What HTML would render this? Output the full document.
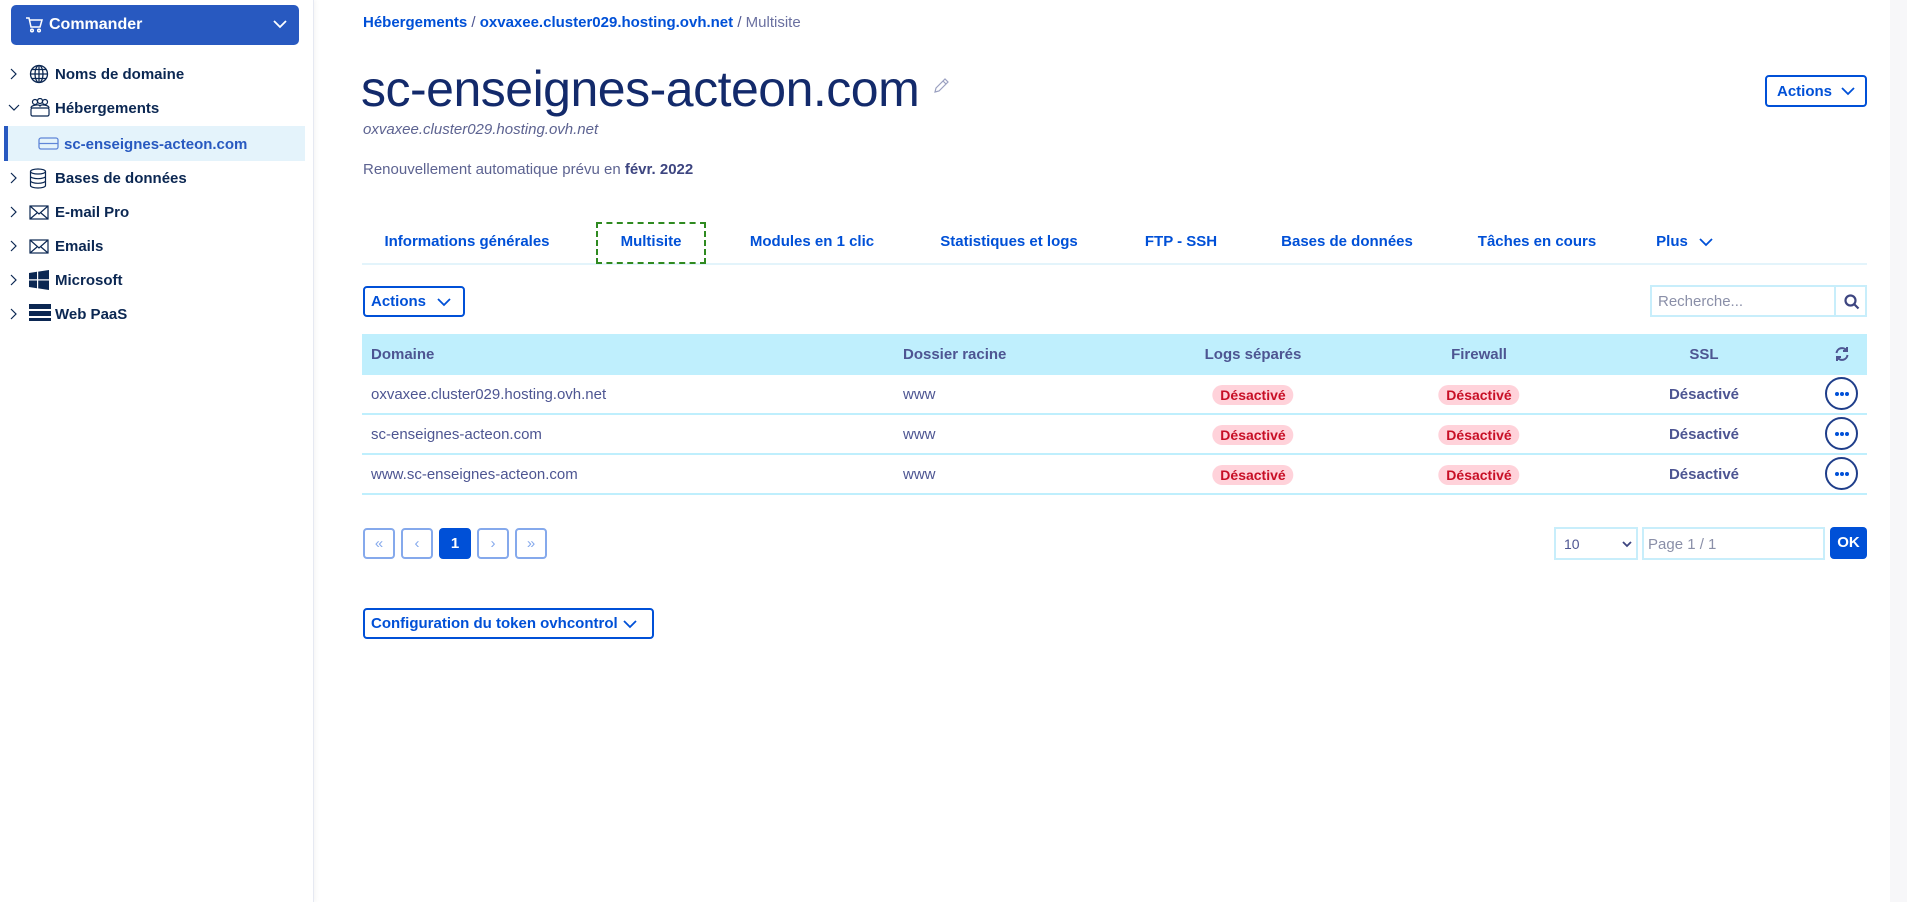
<!DOCTYPE html>
<html><head><meta charset="utf-8"><style>
*{box-sizing:border-box;margin:0;padding:0}
body{width:1907px;height:902px;position:relative;background:#fff;font-family:"Liberation Sans",sans-serif;overflow:hidden;color:#4d5592}
.a{position:absolute;white-space:nowrap}
.side{position:absolute;left:0;top:0;width:314px;height:902px;background:#fff;border-right:1px solid #e6e9f2;box-shadow:2px 0 4px rgba(0,0,0,.04)}
.cmd{position:absolute;left:11px;top:5px;width:288px;height:40px;background:#2859c0;border-radius:5px;color:#fff;font-weight:bold;font-size:16px}
.nav{position:absolute;left:0;width:314px;height:34px;font-size:15px;font-weight:bold;color:#0b2752}
.nav .c{position:absolute;left:10px;top:11px}
.nav .t{position:absolute;left:55px;top:9px}
.nav svg.i{position:absolute;left:29px;top:7px}
.lnk{color:#0050d7;font-weight:bold}
.tab{position:absolute;top:233px;font-size:15px;font-weight:bold;color:#0050d7;transform:translateX(-50%)}
.btn{position:absolute;border:2px solid #0050d7;border-radius:4px;color:#0050d7;font-weight:bold;font-size:15px}
.row{position:absolute;left:362px;width:1505px;height:40px;border-bottom:2px solid #bfeffd}
.bad{position:absolute;background:#ffd2da;color:#c80f26;font-weight:bold;font-size:14px;border-radius:10px;padding:2px 8px;transform:translateX(-50%)}
.ssl{position:absolute;font-weight:bold;font-size:15px;color:#4d5592;transform:translateX(-50%)}
.dots{position:absolute;left:1825px;width:33px;height:33px;border:2px solid #1f3e8a;border-radius:50%}
.dots::after{content:"";position:absolute;left:8px;top:13px;width:4px;height:4px;border-radius:50%;background:#0050d7;box-shadow:5px 0 #0050d7,10px 0 #0050d7}
.pg{position:absolute;top:528px;width:32px;height:31px;border:2px solid #85a9ec;border-radius:4px;color:#85a9ec;text-align:center;line-height:27px;font-size:15px}
</style></head><body>
<div class="side">
 <div class="cmd">
  <svg class="a" style="left:14px;top:12px" width="18" height="16" viewBox="0 0 18 16" fill="none" stroke="#fff" stroke-width="1.5"><path d="M1 1h3l2 9h9l2-7H5"/><circle cx="7" cy="13.5" r="1.3"/><circle cx="14" cy="13.5" r="1.3"/></svg>
  <span class="a" style="left:38px;top:11px">Commander</span>
  <svg class="a" style="left:262px;top:15px" width="14" height="9" viewBox="0 0 14 9" fill="none" stroke="#fff" stroke-width="1.8"><path d="M1 1l6 6 6-6"/></svg>
 </div>
 <div class="nav" style="top:57px"><svg class="c" width="8" height="12" viewBox="0 0 8 12" fill="none" stroke="#0b2752" stroke-width="1.2"><path d="M1 1l5 5-5 5"/></svg><svg class="i" width="20" height="20" viewBox="0 0 20 20" fill="none" stroke="#0b2752" stroke-width="1.3"><circle cx="10" cy="10" r="8.5"/><ellipse cx="10" cy="10" rx="4" ry="8.5"/><path d="M1.5 10h17M3 5.5h14M3 14.5h14M10 1.5v17"/></svg><span class="t">Noms de domaine</span></div>
 <div class="nav" style="top:91px"><svg class="c" style="left:8px;top:13px" width="12" height="8" viewBox="0 0 12 8" fill="none" stroke="#0b2752" stroke-width="1.2"><path d="M1 1l5 5 5-5"/></svg><svg class="i" width="22" height="20" viewBox="0 0 22 20" fill="none" stroke="#0b2752" stroke-width="1.2"><circle cx="6" cy="4" r="2.5"/><circle cx="11" cy="3" r="2.5"/><circle cx="16" cy="4" r="2.5"/><path d="M2 10c0-3 8-4 9-2 1-2 9-1 9 2"/><rect x="2" y="10" width="18" height="8" rx="1.5"/></svg><span class="t">Hébergements</span></div>
 <div class="a" style="left:4px;top:126px;width:301px;height:35px;background:#e4f3fb;border-left:4px solid #2859c0"></div>
 <svg class="a" style="left:38px;top:137px" width="21" height="13" viewBox="0 0 21 13" fill="none" stroke="#5f86d8" stroke-width="1.3"><rect x="1" y="1" width="19" height="11" rx="2"/><path d="M1 6.5h19"/></svg>
 <span class="a" style="left:64px;top:136px;font-size:15px;font-weight:bold;color:#2859c0">sc-enseignes-acteon.com</span>
 <div class="nav" style="top:161px"><svg class="c" width="8" height="12" viewBox="0 0 8 12" fill="none" stroke="#0b2752" stroke-width="1.2"><path d="M1 1l5 5-5 5"/></svg><svg class="i" width="18" height="21" viewBox="0 0 18 21" fill="none" stroke="#0b2752" stroke-width="1.2"><ellipse cx="9" cy="3.5" rx="7.5" ry="2.5"/><path d="M1.5 3.5v14c0 1.5 3.4 2.5 7.5 2.5s7.5-1 7.5-2.5v-14M1.5 8.2c0 1.4 3.4 2.5 7.5 2.5s7.5-1.1 7.5-2.5M1.5 12.8c0 1.4 3.4 2.5 7.5 2.5s7.5-1.1 7.5-2.5"/></svg><span class="t">Bases de données</span></div>
 <div class="nav" style="top:195px"><svg class="c" width="8" height="12" viewBox="0 0 8 12" fill="none" stroke="#0b2752" stroke-width="1.2"><path d="M1 1l5 5-5 5"/></svg><svg class="i" style="top:10px" width="20" height="15" viewBox="0 0 20 15" fill="none" stroke="#0b2752" stroke-width="1.2"><rect x="1" y="1" width="18" height="13"/><path d="M1 1l9 8 9-8M1 14l7-6M19 14l-7-6"/></svg><span class="t">E-mail Pro</span></div>
 <div class="nav" style="top:229px"><svg class="c" width="8" height="12" viewBox="0 0 8 12" fill="none" stroke="#0b2752" stroke-width="1.2"><path d="M1 1l5 5-5 5"/></svg><svg class="i" style="top:10px" width="20" height="15" viewBox="0 0 20 15" fill="none" stroke="#0b2752" stroke-width="1.2"><rect x="1" y="1" width="18" height="13"/><path d="M1 1l9 8 9-8M1 14l7-6M19 14l-7-6"/></svg><span class="t">Emails</span></div>
 <div class="nav" style="top:263px"><svg class="c" width="8" height="12" viewBox="0 0 8 12" fill="none" stroke="#0b2752" stroke-width="1.2"><path d="M1 1l5 5-5 5"/></svg><svg class="i" width="20" height="20" viewBox="0 0 20 20" fill="#0b2752"><path d="M0 3l8-1.2V9.3H0zM9.2 1.6L20 0v9.3H9.2zM0 10.5h8v7.7L0 17zM9.2 10.5H20V20l-10.8-1.6z"/></svg><span class="t">Microsoft</span></div>
 <div class="nav" style="top:297px"><svg class="c" width="8" height="12" viewBox="0 0 8 12" fill="none" stroke="#0b2752" stroke-width="1.2"><path d="M1 1l5 5-5 5"/></svg><svg class="i" width="22" height="20" viewBox="0 0 22 20" fill="#0b2752"><rect x="0" y="0" width="22" height="5"/><rect x="0" y="7" width="22" height="5"/><rect x="0" y="14" width="22" height="3"/></svg><span class="t">Web PaaS</span></div>
</div>

<div class="a" style="left:363px;top:14px;font-size:15px"><span class="lnk">Hébergements</span> / <span class="lnk">oxvaxee.cluster029.hosting.ovh.net</span> / <span style="color:#6a70a0">Multisite</span></div>
<div class="a" style="left:361px;top:60px;font-size:50px;color:#132a6b;letter-spacing:-0.5px">sc-enseignes-acteon.com</div>
<svg class="a" style="left:933px;top:78px" width="16" height="16" viewBox="0 0 16 16" fill="none" stroke="#9aa0c0" stroke-width="1.2"><path d="M2 14l1-4 9-9 3 3-9 9zM10 3l3 3"/></svg>
<div class="a" style="left:363px;top:121px;font-size:15px;font-style:italic;color:#5d6391">oxvaxee.cluster029.hosting.ovh.net</div>
<div class="a" style="left:363px;top:161px;font-size:15px;color:#5d6391">Renouvellement automatique prévu en <b style="color:#3d4580">févr. 2022</b></div>
<div class="btn" style="left:1765px;top:75px;width:102px;height:32px"><span class="a" style="left:10px;top:6px">Actions</span><svg class="a" style="left:74px;top:10px" width="14" height="9" viewBox="0 0 14 9" fill="none" stroke="#0050d7" stroke-width="1.8"><path d="M1 1l6 6 6-6"/></svg></div>

<div class="a" style="left:362px;top:263px;width:1505px;height:2px;background:#e3f4fb"></div>
<div class="tab" style="left:467px">Informations générales</div>
<div class="a" style="left:596px;top:222px;width:110px;height:42px;border:2px dashed #2f8a20"></div>
<div class="tab" style="left:651px">Multisite</div>
<div class="tab" style="left:812px">Modules en 1 clic</div>
<div class="tab" style="left:1009px">Statistiques et logs</div>
<div class="tab" style="left:1181px">FTP - SSH</div>
<div class="tab" style="left:1347px">Bases de données</div>
<div class="tab" style="left:1537px">Tâches en cours</div>
<div class="tab" style="left:1672px">Plus</div>
<svg class="a" style="left:1699px;top:238px" width="14" height="9" viewBox="0 0 14 9" fill="none" stroke="#0050d7" stroke-width="1.8"><path d="M1 1l6 6 6-6"/></svg>

<div class="btn" style="left:363px;top:286px;width:102px;height:31px"><span class="a" style="left:6px;top:5px">Actions</span><svg class="a" style="left:72px;top:10px" width="14" height="9" viewBox="0 0 14 9" fill="none" stroke="#0050d7" stroke-width="1.8"><path d="M1 1l6 6 6-6"/></svg></div>
<div class="a" style="left:1650px;top:285px;width:217px;height:32px;border:2px solid #c8eefb"><span class="a" style="left:6px;top:6px;font-size:15px;color:#8a8fa8">Recherche...</span><div class="a" style="left:182px;top:-2px;width:2px;height:32px;background:#c8eefb"></div><svg class="a" style="left:192px;top:7px" width="16" height="16" viewBox="0 0 16 16" fill="none" stroke="#3d4580" stroke-width="2.2"><circle cx="6.5" cy="6.5" r="5"/><path d="M10.5 10.5l4 4"/></svg></div>

<div class="a" style="left:362px;top:334px;width:1505px;height:41px;background:#bfeffd"></div>
<span class="a" style="left:371px;top:346px;font-size:15px;font-weight:bold;color:#4d5592">Domaine</span>
<span class="a" style="left:903px;top:346px;font-size:15px;font-weight:bold;color:#4d5592">Dossier racine</span>
<span class="ssl" style="left:1253px;top:346px">Logs séparés</span>
<span class="ssl" style="left:1479px;top:346px">Firewall</span>
<span class="ssl" style="left:1704px;top:346px">SSL</span>
<svg class="a" style="left:1834px;top:346px" width="16" height="16" viewBox="0 0 16 16" fill="none" stroke="#4d5592" stroke-width="2"><path d="M2.5 7A5.5 5.5 0 0 1 12.5 4.5M13.5 9A5.5 5.5 0 0 1 3.5 11.5"/><path d="M13 1v4h-4M3 15v-4h4" fill="#4d5592"/></svg>

<div class="row" style="top:375px"></div>
<div class="row" style="top:415px"></div>
<div class="row" style="top:455px"></div>

<span class="a" style="left:371px;top:386px;font-size:15px">oxvaxee.cluster029.hosting.ovh.net</span>
<span class="a" style="left:903px;top:386px;font-size:15px">www</span>
<span class="bad" style="left:1253px;top:385px">Désactivé</span><span class="bad" style="left:1479px;top:385px">Désactivé</span><span class="ssl" style="left:1704px;top:386px">Désactivé</span><div class="dots" style="top:377px"></div>

<span class="a" style="left:371px;top:426px;font-size:15px">sc-enseignes-acteon.com</span>
<span class="a" style="left:903px;top:426px;font-size:15px">www</span>
<span class="bad" style="left:1253px;top:425px">Désactivé</span><span class="bad" style="left:1479px;top:425px">Désactivé</span><span class="ssl" style="left:1704px;top:426px">Désactivé</span><div class="dots" style="top:417px"></div>

<span class="a" style="left:371px;top:466px;font-size:15px">www.sc-enseignes-acteon.com</span>
<span class="a" style="left:903px;top:466px;font-size:15px">www</span>
<span class="bad" style="left:1253px;top:465px">Désactivé</span><span class="bad" style="left:1479px;top:465px">Désactivé</span><span class="ssl" style="left:1704px;top:466px">Désactivé</span><div class="dots" style="top:457px"></div>

<div class="pg" style="left:363px">«</div>
<div class="pg" style="left:401px">‹</div>
<div class="pg" style="left:439px;background:#0050d7;border-color:#0050d7;color:#fff;font-weight:bold">1</div>
<div class="pg" style="left:477px">›</div>
<div class="pg" style="left:515px">»</div>

<div class="a" style="left:1554px;top:527px;width:84px;height:33px;border:2px solid #c8eefb"><span class="a" style="left:8px;top:7px;font-size:14px;color:#4d5592">10</span><svg class="a" style="left:66px;top:12px" width="10" height="7" viewBox="0 0 10 7" fill="none" stroke="#3d4580" stroke-width="1.8"><path d="M1 1l4 4 4-4"/></svg></div>
<div class="a" style="left:1642px;top:527px;width:183px;height:33px;border:2px solid #c8eefb"><span class="a" style="left:4px;top:7px;font-size:15px;color:#8a8fa8">Page 1 / 1</span></div>
<div class="a" style="left:1830px;top:527px;width:37px;height:32px;background:#0050d7;border-radius:4px;color:#fff;font-weight:bold;font-size:15px;text-align:center;line-height:32px">OK</div>

<div class="btn" style="left:363px;top:608px;width:291px;height:31px"><span class="a" style="left:6px;top:5px">Configuration du token ovhcontrol</span><svg class="a" style="left:258px;top:10px" width="14" height="9" viewBox="0 0 14 9" fill="none" stroke="#0050d7" stroke-width="1.8"><path d="M1 1l6 6 6-6"/></svg></div>

<div class="a" style="left:1890px;top:0;width:17px;height:902px;background:#f7f7f9"></div>
</body></html>
